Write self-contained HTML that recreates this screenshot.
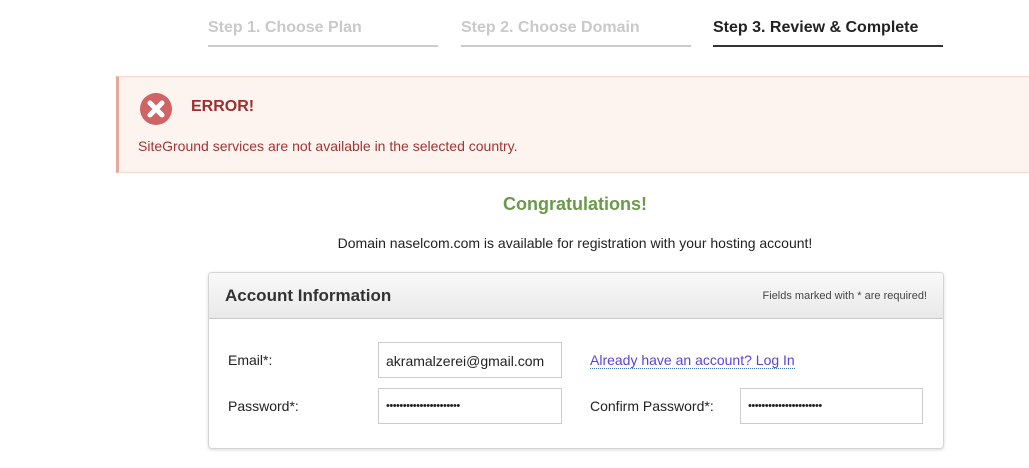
<!DOCTYPE html>
<html><head><style>
*{margin:0;padding:0;box-sizing:border-box}
body{width:1029px;height:468px;background:#fff;font-family:"Liberation Sans",sans-serif;position:relative;overflow:hidden;color:#222}
.step{position:absolute;top:19px;font-size:16px;font-weight:bold;color:#c9c9c9;padding-bottom:8px;border-bottom:2px solid #ccc;width:230px}
.err{position:absolute;left:116px;top:76px;width:913px;height:97px;background:#fdf3ef;border-left:3px solid #e5a79a;border-top:1px solid #fbd6cc;border-bottom:1px solid #fbd6cc}
.abs{position:absolute}
.card{position:absolute;left:208px;top:272px;width:736px;height:177px;border:1px solid #d4d4d4;border-radius:4px;box-shadow:0 1px 3px rgba(0,0,0,.15);overflow:hidden}
.hd{height:46px;background:linear-gradient(#f9f9f9,#e9e9e9);border-bottom:1px solid #c8c8c8}
.inp{position:absolute;height:36px;border:1px solid #ccc;font-size:14px;padding:10px 7px;color:#222}
.dots{font-size:11px;padding:11px 7px;letter-spacing:-0.5px}
.lbl{position:absolute;font-size:14px;color:#222}
</style></head><body>
<div class="step" style="left:208px">Step 1. Choose Plan</div>
<div class="step" style="left:461px">Step 2. Choose Domain</div>
<div class="step" style="left:713px;color:#222;border-color:#333">Step 3. Review &amp; Complete</div>
<div class="err">
<svg class="abs" style="left:20px;top:15px" width="34" height="34" viewBox="0 0 34 34"><circle cx="17" cy="17" r="16" fill="#d06464"/><path d="M11 11L23 23M23 11L11 23" stroke="#fff" stroke-width="5" stroke-linecap="round"/></svg>
<div class="abs" style="left:72px;top:21px;font-size:16px;font-weight:bold;color:#9e2e2e">ERROR!</div>
<div class="abs" style="left:19px;top:61px;font-size:14px;color:#9e3535">SiteGround services are not available in the selected country.</div>
</div>
<div class="abs" style="left:0;width:1150px;text-align:center;top:194px;font-size:18px;font-weight:bold;color:#6a9a4a">Congratulations!</div>
<div class="abs" style="left:0;width:1150px;text-align:center;top:235px;font-size:14px;color:#222">Domain naselcom.com is available for registration with your hosting account!</div>
<div class="card">
<div class="hd"><div class="abs" style="left:16px;top:13px;font-size:17px;font-weight:bold;color:#333">Account Information</div>
<div class="abs" style="right:16px;top:17px;font-size:11px;color:#444">Fields marked with * are required!</div></div>
<div class="lbl" style="left:19px;top:79px">Email*:</div>
<div class="inp" style="left:169px;top:69px;width:184px">akramalzerei@gmail.com</div>
<div class="lbl" style="left:381px;top:79px;color:#5a44d8;border-bottom:1px dotted #3b6fc0">Already have an account? Log In</div>
<div class="lbl" style="left:19px;top:125px">Password*:</div>
<div class="inp dots" style="left:169px;top:115px;width:184px">••••••••••••••••••••••</div>
<div class="lbl" style="left:381px;top:125px">Confirm Password*:</div>
<div class="inp dots" style="left:531px;top:115px;width:183px">••••••••••••••••••••••</div>
</div>
</body></html>
